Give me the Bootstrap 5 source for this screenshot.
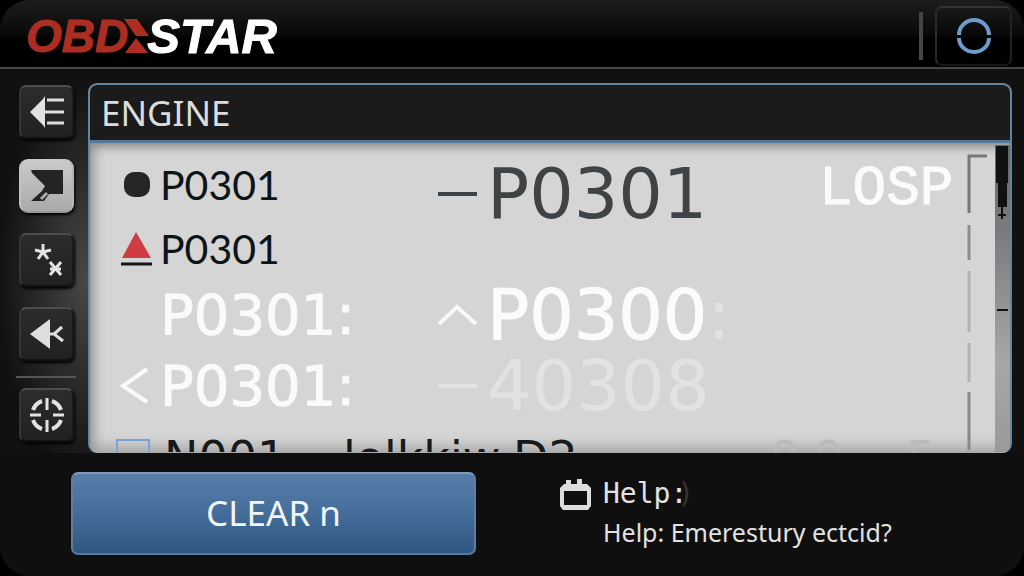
<!DOCTYPE html>
<html lang="en">
<head>
<meta charset="utf-8">
<meta name="viewport" content="width=device-width, initial-scale=1">
<title>OBDSTAR – Engine</title>
<link href="https://cdn.jsdelivr.net/npm/bootstrap@5.3.0/dist/css/bootstrap.min.css" rel="stylesheet">
<style>
  body { background: #000; font-family: "Noto Sans", sans-serif; color: #e6e6e6; }
  .device { min-height: 100vh; background: #0f0f0f; border-radius: 30px; overflow: hidden; }
  .topbar { height: 69px; padding: 4px 12px 0 26px; background: linear-gradient(#1d1d1d, #090909 34px, #000 40px, #000); border-bottom: 2px solid #474645; }
  .brand { font: italic bold 46px/62px "Liberation Sans", sans-serif; color: #fff; text-decoration: none; -webkit-text-stroke: 1px; }
  .brand-red { color: #ac2d22; }
  .brand-white { font-size: 49px; }
  .brand svg { width: 27px; height: 34px; margin: 0 -3px 0 -5px; }
  .top-rule { width: 4px; height: 48px; background: #454545; margin-right: 12px; }
  .sync { width: 77px; height: 60px; background: transparent; border: 2px solid; border-color: #333 #222 #161616 #2a2a2a; border-radius: 7px; }
  .mid { padding-right: 12px; background: radial-gradient(ellipse 90px 200px at 88px 210px, #484848, #111 100%), #111; }
  .rail { width: 88px; padding: 16px 0 0 19px; }
  .rail-keys { gap: 20px; }
  .key { width: 55px; height: 54px; background: linear-gradient(#2b2c2d, #202122); border: 2px solid #34363a; border-top-color: #4c4d4f; border-right-color: #191919; border-bottom-color: #111; border-radius: 7px; box-shadow: 1px 2px 3px #000; }
  .key-on { background: linear-gradient(#cacaca, #aaa); border-color: #c9c9c9 #b5b5b5 #999 #c2c2c2; border-radius: 9px; }
  .rail-rule { width: 60px; height: 2px; margin: 15px 0 10px -3px; background: #555; }
  .panel { margin-top: 14px; border: 2px solid #64849f; border-bottom: 1px solid #aaa; border-radius: 9px; overflow: hidden; height: 370px; background: #d5d5d5; }
  .panel-title { height: 58px; padding: 0 11px; font-size: 35px; line-height: 55px; background: #1b1b1b; color: #ddd; border-bottom: 3px solid #55789a; }
  .sheet { box-shadow: inset 0 12px 10px -8px #8a8a8a, inset 12px 0 12px -8px #929292, inset 0 -16px 14px -10px #a9a9a9; }
  .codes { display: grid; grid-template-columns: 320px minmax(0, 1fr) 148px; grid-template-rows: 64px 64px 70px 72px 60px; padding: 9px 0 0 27px; white-space: nowrap; }
  .code { display: flex; align-items: center; line-height: 1; }
  .c1 { grid-column: 1; } .c2 { grid-column: 2; } .c3 { grid-column: 3; }
  .r1 { grid-row: 1; } .r2 { grid-row: 2; } .r3 { grid-row: 3; } .r4 { grid-row: 4; } .r5 { grid-row: 5; }
  .mark-cell { width: 43px; flex: none; }
  .wide-cell { width: 50px; flex: none; }
  .sm { font-family: Lato, sans-serif; font-size: 41px; color: #0d1417; }
  .md { font-family: "DejaVu Sans", sans-serif; font-size: 56px; color: #fafafa; -webkit-text-stroke: 1px #fafafa; }
  .lg { font-family: "DejaVu Sans", sans-serif; font-size: 70px; }
  .tall { height: 84px; }
  .slate { color: #3f4345; }
  .pale { color: #fbfbfb; -webkit-text-stroke: 1px #fbfbfb; }
  .ghost { color: #e2e2e2; -webkit-text-stroke: 0; }
  .losp { font-family: "Liberation Mono", monospace; font-size: 56px; color: #fbfbfb; -webkit-text-stroke: 1px #fbfbfb; height: 74px; }
  .last { grid-column: 1 / span 3; font-family: "DejaVu Sans", sans-serif; font-size: 46px; color: #17191a; align-items: flex-start; padding-top: 13px; }
  .last-tick { width: 34px; height: 34px; margin: 4px 14px 0 -1px; appearance: none; background: transparent; border: 2px solid #79a3d4; border-radius: 0; flex: none; }
  .w-first { width: 179px; } .w-mid { width: 170px; } .w-end { width: 257px; }
  .faint { color: #bababa; } .w-faint { width: 44px; } .w-faint-2 { width: 92px; }
  .guide { width: 28px; margin-top: 9px; flex: none; }
  .track { width: 15px; margin-top: 2px; flex: none; }
  .foot { padding: 19px 12px 21px 71px; }
  .clear { width: 405px; max-width: 44%; height: 83px; font-size: 35px; color: #f4f4f4; padding: 0; background: linear-gradient(#587da9, #466f9d 45%, #305781); border: 2px solid #5d84a8; border-color: #7e9cba #5b80a3 #55799a; border-radius: 7px; }
  .clear:hover { color: #fff; background: #466f9d; }
  .help { margin-left: 83px; padding-top: 3px; color: #e2e2e2; }
  .help-head { font: 28px/38px "DejaVu Sans Mono", monospace; gap: 11px; }
  .help-paren { color: #333; margin-left: -10px; }
  .help-text { font-size: 25px; line-height: 38px; margin-left: 44px; color: inherit; text-decoration: none; }
</style>
</head>
<body>
<div class="device d-flex flex-column">
  <header class="topbar d-flex align-items-center">
    <a href="#" class="brand d-flex align-items-center me-auto"><span class="brand-red">OBD</span><svg viewBox="0 0 27 34" aria-hidden="true"><path d="M1 0h13l12 17H13z M13 19L2 34h23z" fill="#ac2d22"/></svg><span class="brand-white">STAR</span></a>
    <div class="top-rule"></div>
    <button type="button" class="sync d-flex align-items-center justify-content-center" aria-label="Sync"><svg width="36" height="36" viewBox="0 0 36 36" fill="none" stroke="#6e9bcc" stroke-width="4"><path d="M3 17a15 15 0 0 1 30 0M3 20a15 14 0 0 0 30 0"/></svg></button>
  </header>

  <div class="mid d-flex">
    <nav class="rail flex-shrink-0" aria-label="Tools">
      <div class="rail-keys d-flex flex-column align-items-start">
        <button type="button" class="key p-0" aria-label="Back"><svg width="36" height="34" viewBox="0 0 36 34"><path d="M1 17L14 4l2-3v32l-2-3z" fill="#e2e2e2"/><path d="M18 5h17M14 17h21M18 28h17" stroke="#dedede" stroke-width="3"/></svg></button>
        <button type="button" class="key key-on p-0" aria-label="Screen"><svg width="36" height="34" viewBox="0 0 36 34"><path d="M2 1h32v24H20l-5 7H2l11-10 3-5L3 4z" fill="#232425"/><path d="M12 30l6-6" stroke="#aaa" stroke-width="3" fill="none"/></svg></button>
        <button type="button" class="key p-0" aria-label="Options"><svg width="36" height="38" viewBox="0 0 36 38" stroke="#e3e3e3" stroke-width="3"><path d="M14 3v8M14 11L6 9M14 11l8-2M14 11l-5 7M14 11l5 7M21 21l11 13M32 21L21 34M21 28h11"/></svg></button>
        <button type="button" class="key p-0" aria-label="Previous"><svg width="36" height="34" viewBox="0 0 36 34"><path d="M1 17L21 2v30z" fill="#dedede"/><path d="M21 17h6M33 10l-8 7 9 7" stroke="#dedede" stroke-width="3" fill="none"/></svg></button>
      </div>
      <div class="rail-rule"></div>
      <button type="button" class="key p-0" aria-label="Target"><svg width="38" height="38" viewBox="0 0 38 38" fill="none" stroke="#e2e2e2"><path d="M5 14A15 15 0 0 1 14 5M24 5a15 15 0 0 1 9 9M33 24a15 15 0 0 1-9 9M14 33A15 15 0 0 1 5 24" stroke-width="4"/><path d="M19 2v12M19 24v12M2 19h11M25 19h11" stroke-width="3"/></svg></button>
    </nav>

    <main class="panel flex-grow-1 d-flex flex-column">
      <h1 class="panel-title fw-normal m-0 flex-shrink-0">ENGINE</h1>
      <div class="sheet d-flex flex-grow-1 overflow-hidden">
        <div class="codes flex-grow-1">
          <div class="code sm c1 r1"><span class="mark-cell d-flex"><svg width="34" height="28" viewBox="0 0 34 28"><rect x="7" y="2" width="26" height="25" rx="10" fill="#242628"/></svg></span>P0301</div>
          <div class="code lg slate tall c2 r1"><span class="wide-cell d-flex"><svg width="42" height="8" viewBox="0 0 42 8"><path d="M1 4h39" stroke="#3f4345" stroke-width="4"/></svg></span>P0301</div>
          <div class="code losp c3 r1">LOSP</div>
          <div class="code sm c1 r2"><span class="mark-cell d-flex"><svg width="38" height="36" viewBox="0 0 38 36"><path d="M19 2l15 26H5z" fill="#cf3d42"/><path d="M4 34h31" stroke="#141414" stroke-width="3"/></svg></span>P0301</div>
          <div class="code md c1 r3"><span class="mark-cell"></span>P0301:</div>
          <div class="code lg pale c2 r3"><span class="wide-cell d-flex"><svg width="42" height="24" viewBox="0 0 42 24"><path d="M2 21L20 4l19 17" stroke="#f8f8f8" stroke-width="4" fill="none"/></svg></span>P0300<span class="ghost">:</span></div>
          <div class="code md c1 r4"><span class="mark-cell d-flex"><svg width="34" height="40" viewBox="0 0 34 40"><path d="M30 3L6 20l24 16" stroke="#fafafa" stroke-width="4" fill="none"/></svg></span>P0301:</div>
          <div class="code lg ghost c2 r4"><span class="wide-cell d-flex"><svg width="42" height="8" viewBox="0 0 42 8"><path d="M1 4h39" stroke="#e2e2e2" stroke-width="4"/></svg></span>40308</div>
          <div class="code last r5"><input class="last-tick" type="checkbox" id="n001"><label class="d-flex" for="n001"><span class="w-first">N001</span><span class="w-mid">lolkkiw</span><span class="w-end">D2</span><span class="faint w-faint">0</span><span class="faint w-faint-2">0</span><span class="faint">5</span></label></div>
        </div>
        <svg class="guide" height="300" viewBox="0 0 28 300" fill="none" stroke-width="3"><path d="M20 4H2v57" stroke="#777"/><path d="M2 73v35" stroke="#8d8d8d"/><path d="M2 119v61M2 191v39" stroke="#b2b2b2"/><path d="M2 240v58" stroke="#888"/></svg>
        <svg class="track" height="310" viewBox="0 0 15 310"><defs><linearGradient id="bar" x2="0" y2="1"><stop stop-color="#666"/><stop offset=".3" stop-color="#7b7d80"/><stop offset=".7" stop-color="#a5a7a9"/><stop offset="1" stop-color="#999"/></linearGradient></defs><path d="M0 0h15v310H0z" fill="url(#bar)"/><path d="M1 1h12v37h-1v24H3V38H1z" fill="#101112"/><path d="M7 62v12M3 70h8M2 165h11" stroke="#111" stroke-width="2"/></svg>
      </div>
    </main>
  </div>

  <footer class="foot d-flex">
    <button type="button" class="btn clear">CLEAR n</button>
    <section class="help">
      <div class="help-head d-flex align-items-center"><svg width="33" height="33" viewBox="0 0 33 33"><path d="M7 6V2h5v4h6V1h5v5h5l4 4v18l-3 4H4l-3-4V10l4-4zM5 13v14h23V13z" fill="#ddd" fill-rule="evenodd"/></svg><span>Help:<span class="help-paren">)</span></span></div>
      <a href="#" class="help-text">Help: Emerestury ectcid?</a>
    </section>
  </footer>
</div>
<script src="https://cdn.jsdelivr.net/npm/bootstrap@5.3.0/dist/js/bootstrap.bundle.min.js"></script>
</body>
</html>
